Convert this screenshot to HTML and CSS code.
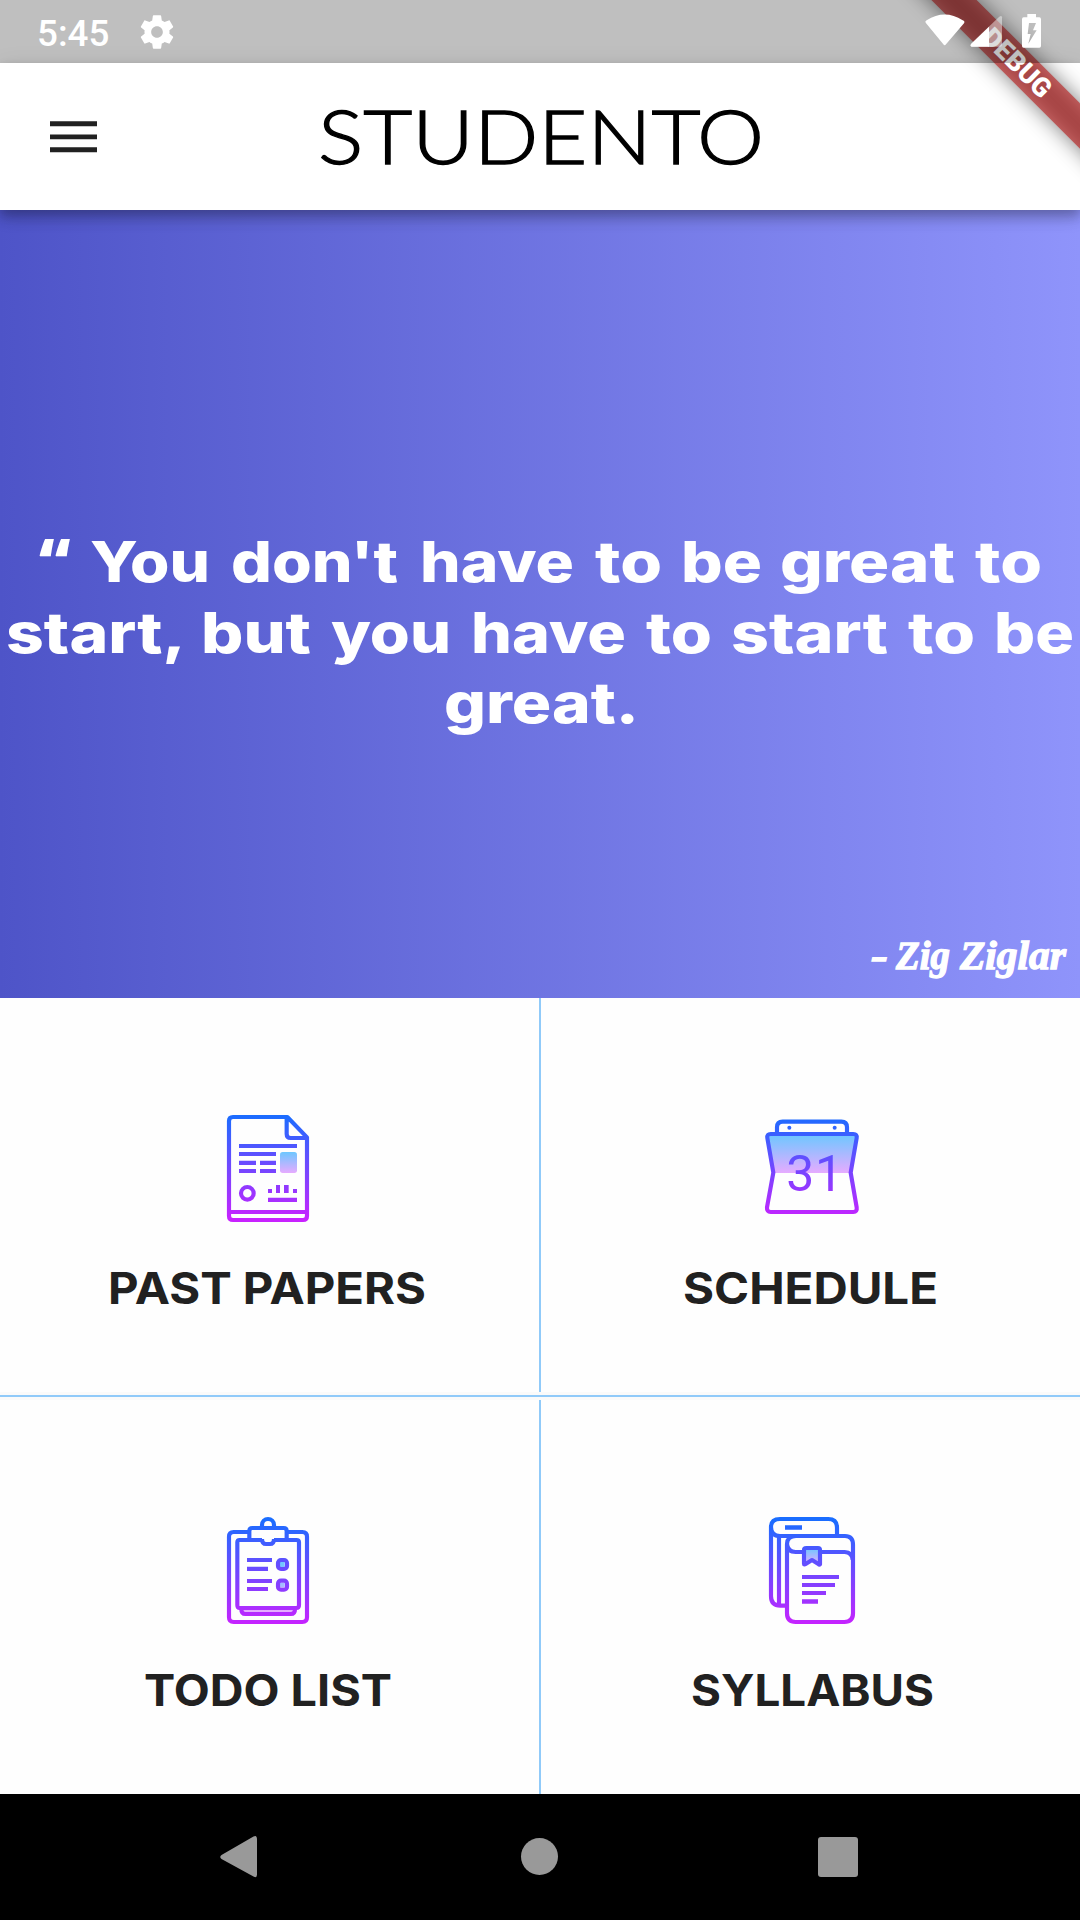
FILE: index.html
```html
<!DOCTYPE html>
<html lang="en">
<head>
<meta charset="utf-8">
<title>Studento</title>
<link rel="stylesheet" href="styles.css">
</head>
<body>
<div class="screen">
  <div class="banner"><span class="banner-shadow"></span><span class="banner-band">DEBUG</span></div>

  <header class="status">
    <span class="clock">5:45</span>
    <svg class="gear" viewBox="0 0 24 24"><path d="M19.43 12.98c.04-.32.07-.64.07-.98s-.03-.66-.07-.98l2.11-1.65c.19-.15.24-.42.12-.64l-2-3.46c-.12-.22-.39-.3-.61-.22l-2.49 1c-.52-.4-1.08-.73-1.69-.98l-.38-2.65C14.46 2.18 14.25 2 14 2h-4c-.25 0-.46.18-.49.42l-.38 2.65c-.61.25-1.17.59-1.69.98l-2.49-1c-.23-.09-.49 0-.61.22l-2 3.46c-.13.22-.07.49.12.64l2.11 1.65c-.04.32-.07.65-.07.98s.03.66.07.98l-2.11 1.65c-.19.15-.24.42-.12.64l2 3.46c.12.22.39.3.61.22l2.49-1c.52.4 1.08.73 1.69.98l.38 2.65c.03.24.24.42.49.42h4c.25 0 .46-.18.49-.42l.38-2.65c.61-.25 1.17-.59 1.69-.98l2.49 1c.23.09.49 0 .61-.22l2-3.46c.12-.22.07-.49-.12-.64l-2.11-1.65zM12 15.5c-1.93 0-3.5-1.57-3.5-3.5s1.57-3.5 3.500-3.500 3.500 1.570 3.500 3.500-1.570 3.500-3.500 3.500z"/></svg>
    <svg class="signals" viewBox="0 0 390 189">
      <path d="M5 68Q2 64 8 61Q62 26 116 61Q124 64 120 70L66 133Q62 139 58 133Z"/>
      <path d="M143 140Q136 138 141 131L225 51Q233 44 234 52V134Q234 140 228 140Z" opacity=".45"/>
      <path d="M143 140Q137 138 142 131L195 80V140Z"/>
      <path fill-rule="evenodd" d="M310 42H336V52H346Q351 52 351 58V138Q351 143 346 143H299Q294 143 294 138V58Q294 52 299 52H310ZM315 69L311 102H320L313 131L338 91H327L336 69Z"/>
    </svg>
  </header>

  <div class="appbar">
    <svg class="menu" viewBox="0 0 47 32"><path d="M0 .3H47V5.200H0ZM0 13.500H47V18.300H0ZM0 26.300H47V31.200H0Z"/></svg>
    <svg class="title" viewBox="0 0 460 110"><text x="3" y="81.500" textLength="446" lengthAdjust="spacingAndGlyphs">STUDENTO</text></svg>
  </div>

  <main class="hero">
    <svg class="quote" viewBox="0 0 1080 240">
      <text y="72"><tspan class="mark" x="39" textLength="32" lengthAdjust="spacingAndGlyphs">“</tspan> <tspan x="90" textLength="120" lengthAdjust="spacingAndGlyphs">You</tspan> <tspan x="231" textLength="167" lengthAdjust="spacingAndGlyphs">don't</tspan> <tspan x="420" textLength="154" lengthAdjust="spacingAndGlyphs">have</tspan> <tspan x="595" textLength="67" lengthAdjust="spacingAndGlyphs">to</tspan> <tspan x="681" textLength="81" lengthAdjust="spacingAndGlyphs">be</tspan> <tspan x="780" textLength="175" lengthAdjust="spacingAndGlyphs">great</tspan> <tspan x="975" textLength="67" lengthAdjust="spacingAndGlyphs">to</tspan></text>
      <text y="143"><tspan x="6" textLength="177" lengthAdjust="spacingAndGlyphs">start,</tspan> <tspan x="201" textLength="110" lengthAdjust="spacingAndGlyphs">but</tspan> <tspan x="331" textLength="120" lengthAdjust="spacingAndGlyphs">you</tspan> <tspan x="471" textLength="155" lengthAdjust="spacingAndGlyphs">have</tspan> <tspan x="646" textLength="66" lengthAdjust="spacingAndGlyphs">to</tspan> <tspan x="731" textLength="157" lengthAdjust="spacingAndGlyphs">start</tspan> <tspan x="908" textLength="67" lengthAdjust="spacingAndGlyphs">to</tspan> <tspan x="994" textLength="80" lengthAdjust="spacingAndGlyphs">be</tspan></text>
      <text y="213"><tspan x="444" textLength="195" lengthAdjust="spacingAndGlyphs">great.</tspan></text>
    </svg>
    <svg class="author" viewBox="0 0 210 60"><text x="0" y="39"><tspan x="1" textLength="17" lengthAdjust="spacingAndGlyphs">-</tspan> <tspan x="26" textLength="54" lengthAdjust="spacingAndGlyphs">Zig</tspan> <tspan x="90" textLength="106" lengthAdjust="spacingAndGlyphs">Ziglar</tspan></text></svg>
  </main>

  <svg class="defs" width="0" height="0">
    <defs>
      <linearGradient id="ink" gradientUnits="userSpaceOnUse" x1="0" y1="45" x2="0" y2="360"><stop offset="0" stop-color="#1a6dff"/><stop offset="1" stop-color="#c822ff"/></linearGradient>
      <linearGradient id="tint" x1="0" y1="0" x2="0" y2="1"><stop offset="0" stop-color="#6dc7ff"/><stop offset="1" stop-color="#e6abff"/></linearGradient>
    </defs>
  </svg>

  <section class="row">
    <div class="cell">
      <svg class="icon" viewBox="0 0 360 390">
        <rect class="tint" x="210" y="156" width="51" height="63" rx="8"/>
        <path class="line" d="M232 51H69Q57 51 57 63V348Q57 360 69 360H279Q291 360 291 348V112ZM230 52V102Q230 114 242 114H290M57 336H291"/>
        <circle class="line" cx="112" cy="280" r="19"/>
        <path class="fill" d="M87 132H261V144H87ZM87 156H198V168H87ZM87 182H138V195H87ZM150 182H198V195H150ZM87 207H138V219H87ZM150 207H198V219H150ZM174 267H186V279H174ZM198 255H210V279H198ZM222 255H236V279H222ZM249 267H261V279H249ZM174 293H261V306H174Z"/>
      </svg>
      <svg class="label" viewBox="0 0 340 60"><text x="8" y="46" textLength="318" lengthAdjust="spacingAndGlyphs">PAST PAPERS</text></svg>
    </div>
    <div class="cell">
      <svg class="icon" viewBox="0 0 360 390">
        <path class="tint" d="M52 104H320L301 219H71Z"/>
        <path class="line" d="M81 102V82Q81 65 98 65H274Q291 65 291 82V102M62 102H310Q322 102 320 114L302 218L320 322Q322 336 310 336H62Q50 336 51 322L70 218L52 114Q50 102 62 102Z"/>
        <circle class="fill" cx="118" cy="83" r="6"/><circle class="fill" cx="254" cy="83" r="6"/>
        <text class="day" y="272"><tspan x="109" textLength="84" lengthAdjust="spacingAndGlyphs">3</tspan><tspan x="195" textLength="84" lengthAdjust="spacingAndGlyphs">1</tspan></text>
      </svg>
      <svg class="label" viewBox="0 0 340 60"><text x="43" y="46" textLength="255" lengthAdjust="spacingAndGlyphs">SCHEDULE</text></svg>
    </div>
  </section>
  <div class="divider"></div>
  <section class="row">
    <div class="cell">
      <svg class="icon" viewBox="0 -9 360 390">
        <path class="tint" d="M96 314H250V321H96ZM209 171H224V186H209ZM209 233H224V246H209Z"/>
        <path class="line" d="M118 81H71Q57 81 57 95V337Q57 351 71 351H277Q291 351 291 337V95Q291 81 277 81H232M156 68V60A18 18 0 0 1 192 60V68M118 103V78Q118 69 127 69H221Q230 69 230 78V103M156 105H89Q82 105 82 112V300Q82 309 89 309H259Q267 309 267 300V112Q267 105 259 105H192M156 102Q156 117 168 117H180Q192 117 192 102M94 312Q94 327 106 327H243Q255 327 255 312"/>
        <rect class="line" x="204" y="165" width="27" height="27" rx="9"/><rect class="line" x="204" y="227" width="27" height="27" rx="9"/>
        <path class="fill" d="M111 159H186V171H111ZM111 185H174V198H111ZM111 222H186V234H111ZM111 246H174V258H111Z"/>
      </svg>
      <svg class="label" viewBox="0 0 340 60"><text x="44" y="46" textLength="248" lengthAdjust="spacingAndGlyphs">TODO LIST</text></svg>
    </div>
    <div class="cell">
      <svg class="icon" viewBox="0 -9 360 390">
        <path class="tint" d="M162 129H210V178L186 166L162 178Z"/>
        <path class="line" d="M261 90V68Q261 42 235 42H90Q63 42 63 66Q63 93 90 93H285Q309 93 309 119V325Q309 351 283 351H137Q111 351 111 325V117M63 66V274Q63 302 91 302H111M87 93V300M138 93Q111 94 111 117Q113 141 137 141H160M213 141H284Q307 142 308 165M162 135Q162 129 169 129H204Q210 129 210 135V178Q208 180 205 177L186 165L167 177Q162 180 162 176Z"/>
        <path class="fill" d="M105 61H156V74H105ZM156 210H267V222H156ZM156 234H255V246H156ZM156 258H228V270H156ZM156 283H204V296H156Z"/>
      </svg>
      <svg class="label" viewBox="0 0 340 60"><text x="51" y="46" textLength="243" lengthAdjust="spacingAndGlyphs">SYLLABUS</text></svg>
    </div>
  </section>

  <nav class="navbar">
    <svg viewBox="0 0 48 48"><path d="M42 6.500V41.500Q42 45.500 38.500 43.500L6.500 26Q4 24 6.500 22L38.500 3.500Q42 1.500 42 6.500Z"/></svg>
    <svg viewBox="0 0 48 48"><circle cx="24.500" cy="23.500" r="18.500"/></svg>
    <svg viewBox="0 0 48 48"><rect x="4" y="4" width="40" height="40" rx="3"/></svg>
  </nav>
</div>
</body>
</html>
```
FILE: styles.css
```css
* { box-sizing: border-box; }
body { margin: 0; }
svg { display: block; flex: none; }

.screen {
  position: relative;
  width: 1080px;
  height: 1920px;
  display: flex;
  flex-direction: column;
  overflow: hidden;
  background: #fff;
  font-family: Inter, sans-serif;
}

.status {
  position: relative;
  z-index: 3;
  height: 63px;
  flex: none;
  display: flex;
  align-items: center;
  padding-left: 37px;
  background: rgba(0, 0, 0, .25);
  color: #fff;
}
.status svg { fill: #fff; }
.clock { width: 100px; font: 500 36.75px/63px Roboto, sans-serif; padding-top: 3px; }
.gear { width: 40px; height: 40px; }
.signals { width: 130px; height: 63px; margin-left: auto; margin-right: 26px; }

/* corner ribbon, drawn below the translucent status bar */
.banner {
  position: absolute;
  z-index: 2;
  top: 0;
  right: 0;
  width: 210px;
  height: 210px;
  overflow: hidden;
}
.banner-shadow, .banner-band {
  position: absolute;
  left: -3px;
  top: 47px;
  width: 300px;
  height: 32px;
  transform: rotate(45deg);
}
.banner-shadow { background: rgba(0, 0, 0, .5); filter: blur(10.4px); }
.banner-band {
  background: rgba(183, 28, 28, .63);
  color: #fff;
  font: 900 26.8px/32px Roboto, sans-serif;
  text-align: center;
}

.appbar {
  position: relative;
  z-index: 1;
  height: 147px;
  flex: none;
  display: flex;
  align-items: center;
  padding-left: 50px;
  background: #fff;
  box-shadow: 0 5px 10px rgba(0, 0, 0, .18), 0 10px 14px rgba(0, 0, 0, .12), 0 2px 20px rgba(0, 0, 0, .1);
}
.menu { width: 47px; height: 32px; fill: #212121; }
.title { width: 460px; height: 110px; margin-left: 218px; }
.title text { font: 300 75px Lato, sans-serif; fill: #000; stroke: #000; stroke-width: 1.3px; }

.hero {
  height: 788px;
  flex: none;
  display: flex;
  flex-direction: column;
  justify-content: space-between;
  padding: 300px 0 8px;
  background: linear-gradient(90deg, #4e54c8, #8f94fb);
}
.quote { width: 1080px; height: 240px; }
.quote text { font: 800 56px Inter, sans-serif; fill: #fff; }
.quote .mark { font: 800 60px "Open Sans", sans-serif; }
.author { width: 210px; height: 60px; align-self: flex-end; }
.author text { font: italic 700 40px "Liberation Serif", serif; fill: #fff; stroke: #fff; stroke-width: 1.3px; }

.defs { position: absolute; }
.row { height: 394px; flex: none; display: grid; grid-template-columns: 539px 539px; column-gap: 2px; background: #90caf9; }
.cell {
  display: flex;
  flex-direction: column;
  align-items: center;
  padding-top: 102px;
  background: #fefefe;
}
.cell:last-child { padding-right: 2px; }
.icon { width: 120px; height: 130px; }
.line { fill: none; stroke: url(#ink); stroke-width: 12.5px; stroke-linejoin: round; }
.fill { fill: url(#ink); }
.tint { fill: url(#tint); }
.day { font: 400 152px Roboto, sans-serif; fill: url(#ink); }
.label { width: 340px; height: 60px; margin-top: 28px; }
.label text { font: 700 43.5px Inter, sans-serif; fill: #212121; }
.divider {
  height: 8px;
  flex: none;
  border: solid #fafafa;
  border-width: 3px 0;
  background: #90caf9;
}

.navbar {
  height: 126px;
  flex: none;
  display: flex;
  justify-content: space-between;
  align-items: center;
  padding: 0 218px 0 215px;
  background: #000;
}
.navbar svg { width: 48px; height: 48px; fill: #999; }
```
